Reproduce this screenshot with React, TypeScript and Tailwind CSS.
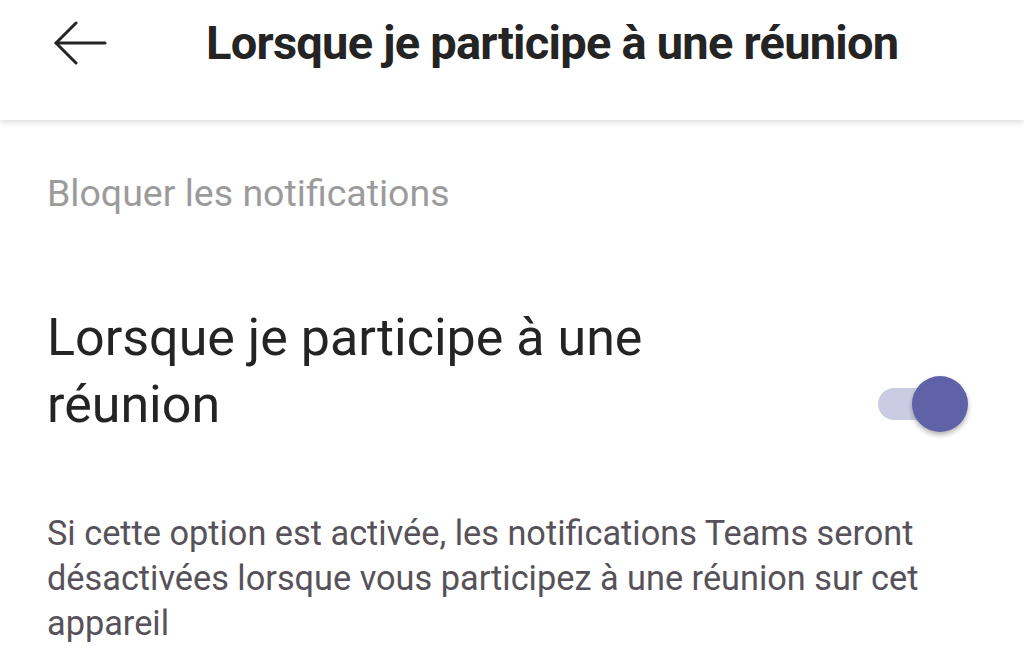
const App = () => {
  return (
    <div className="h-[672px] w-[1024px] overflow-hidden bg-white font-['Roboto',sans-serif]">
      <header className="relative z-10 flex h-[120px] items-start bg-white pt-[17px] shadow-[0_3px_6px_rgba(0,0,0,0.12)]">
        <button className="ml-[54px] mt-[4px] text-[#242424]">
          <svg width="54" height="44" viewBox="0 0 54 44" fill="none" stroke="currentColor" strokeWidth="3" strokeLinecap="round" strokeLinejoin="round">
            <path d="M2 22H51" />
            <path d="M22 2L2 22L22 42" />
          </svg>
        </button>
        <h1 className="ml-[98px] text-[47px] font-bold leading-[52px] tracking-[-0.75px] text-[#242424]">
          Lorsque je participe à une réunion
        </h1>
      </header>

      <main className="px-[47px]">
        <p className="mt-[53px] text-[37.5px] leading-[40px] text-[#9b9b9b]">Bloquer les notifications</p>

        <div className="mt-[91px] flex items-start justify-between">
          <p className="w-[700px] text-[52px] leading-[67px] text-[#242424]">Lorsque je participe à une réunion</p>
          <div className="relative mr-[9px] mt-[84px] h-[32px] w-[90px]">
            <div className="absolute left-0 top-0 h-[32px] w-[70px] rounded-full bg-[#cbcce3]" />
            <div className="absolute right-0 top-[-12px] h-[56px] w-[56px] rounded-full bg-[#5f62a6] shadow-[0_3px_5px_rgba(0,0,0,0.3)]" />
          </div>
        </div>

        <p className="mt-[73px] text-[34.3px] leading-[45px] text-[#57525a]">
          Si cette option est activée, les notifications Teams seront désactivées lorsque vous participez à une réunion sur cet appareil
        </p>
      </main>
    </div>
  );
};

export default App;
